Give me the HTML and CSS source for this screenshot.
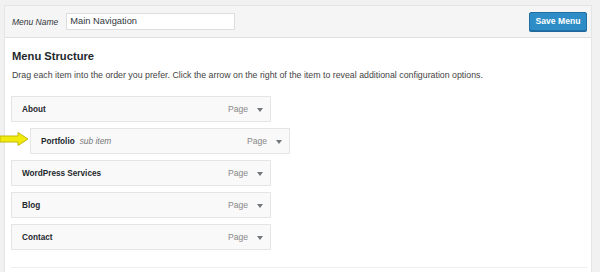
FILE: index.html
```html
<!DOCTYPE html>
<html>
<head>
<meta charset="utf-8">
<link rel="stylesheet" href="styles.css">
</head>
<body>
<div class="panel">
  <div class="header">
    <label class="name-label">Menu Name</label>
    <div class="name-input">Main Navigation</div>
    <div class="spacer"></div>
    <button class="save">Save Menu</button>
  </div>
  <div class="body">
    <h3 class="title">Menu Structure</h3>
    <p class="desc">Drag each item into the order you prefer. Click the arrow on the right of the item to reveal additional configuration options.</p>
    <ul class="items">
      <li class="item"><span class="item-title">About</span><span class="type">Page</span><span class="caret"></span></li>
      <li class="item sub">
        <svg class="pointer" width="30" height="16" viewBox="0 0 30 16"><path d="M0 5 H18 V1.5 L28 8 L18 14.5 V11 H0 Z" fill="#f2ea0c" stroke="#c2b90a" stroke-width="1" stroke-linejoin="round"/></svg>
        <span class="item-title">Portfolio</span><span class="sub-label">sub item</span><span class="type">Page</span><span class="caret"></span></li>
      <li class="item"><span class="item-title">WordPress Services</span><span class="type">Page</span><span class="caret"></span></li>
      <li class="item"><span class="item-title">Blog</span><span class="type">Page</span><span class="caret"></span></li>
      <li class="item"><span class="item-title">Contact</span><span class="type">Page</span><span class="caret"></span></li>
    </ul>
    <div class="footer-line"></div>
  </div>
</div>
</body>
</html>
```
FILE: styles.css
```css
html, body {
  margin: 0;
  padding: 0;
  background: #f1f1f1;
  font-family: "Liberation Sans", Arial, sans-serif;
  color: #23282d;
  overflow: hidden;
}
.panel {
  margin: 5px 0 0 4px;
  width: 588px;
  height: 280px;
  background: #fff;
  border: 1px solid #e5e5e5;
  box-sizing: border-box;
}
.header {
  display: flex;
  align-items: center;
  height: 32px;
  background: #f5f5f5;
  border-bottom: 1px solid #dedede;
  padding: 0 4px 0 7px;
  box-sizing: border-box;
}
.name-label {
  font-style: italic;
  font-size: 8.5px;
  color: #32373c;
  margin-right: 8px;
}
.name-input {
  width: 169px;
  height: 17px;
  box-sizing: border-box;
  border: 1px solid #ddd;
  background: #fff;
  font-size: 9.3px;
  line-height: 15px;
  padding-left: 3px;
  color: #32373c;
}
.spacer { flex: 1; }
.save {
  height: 19px;
  width: 58px;
  padding: 0;
  background: #2e8cc6;
  border: 1px solid #1f6fa5;
  border-radius: 2px;
  box-shadow: 0 1px 0 #1f6a9b;
  color: #fff;
  font-family: "Liberation Sans", Arial, sans-serif;
  font-weight: bold;
  font-size: 8.6px;
  margin-top: -1px;
}
.body {
  padding: 0 0 0 6px;
}
.title {
  margin: 10px 0 0 1px;
  font-size: 11.2px;
  font-weight: bold;
  line-height: 16px;
  color: #23282d;
}
.desc {
  margin: 5px 0 0 1px;
  font-size: 8.8px;
  line-height: 13px;
  color: #444;
}
.items {
  list-style: none;
  margin: 14px 0 0 0;
  padding: 0;
  display: flex;
  flex-direction: column;
  gap: 6px;
}
.item {
  position: relative;
  display: flex;
  align-items: center;
  width: 260px;
  height: 26px;
  box-sizing: border-box;
  border: 1px solid #e5e5e5;
  background: #f9f9f9;
  padding: 0 0 0 10px;
  font-size: 8.2px;
}
.item.sub {
  margin-left: 19px;
}
.item-title {
  font-weight: bold;
  color: #23282d;
  flex: none;
}
.sub-label {
  font-style: italic;
  color: #777;
  margin-left: 5px;
  font-size: 8.4px;
}
.type {
  margin-left: auto;
  color: #888;
  font-size: 8.6px;
}
.caret {
  width: 0;
  height: 0;
  border-left: 3px solid transparent;
  border-right: 3px solid transparent;
  border-top: 4px solid #72777c;
  margin: 1px 7px 0 9px;
}
.pointer {
  position: absolute;
  left: -31px;
  top: 2px;
}
.footer-line {
  margin-top: 17px;
  height: 1px;
  background: #eee;
  width: 577px;
}
```
